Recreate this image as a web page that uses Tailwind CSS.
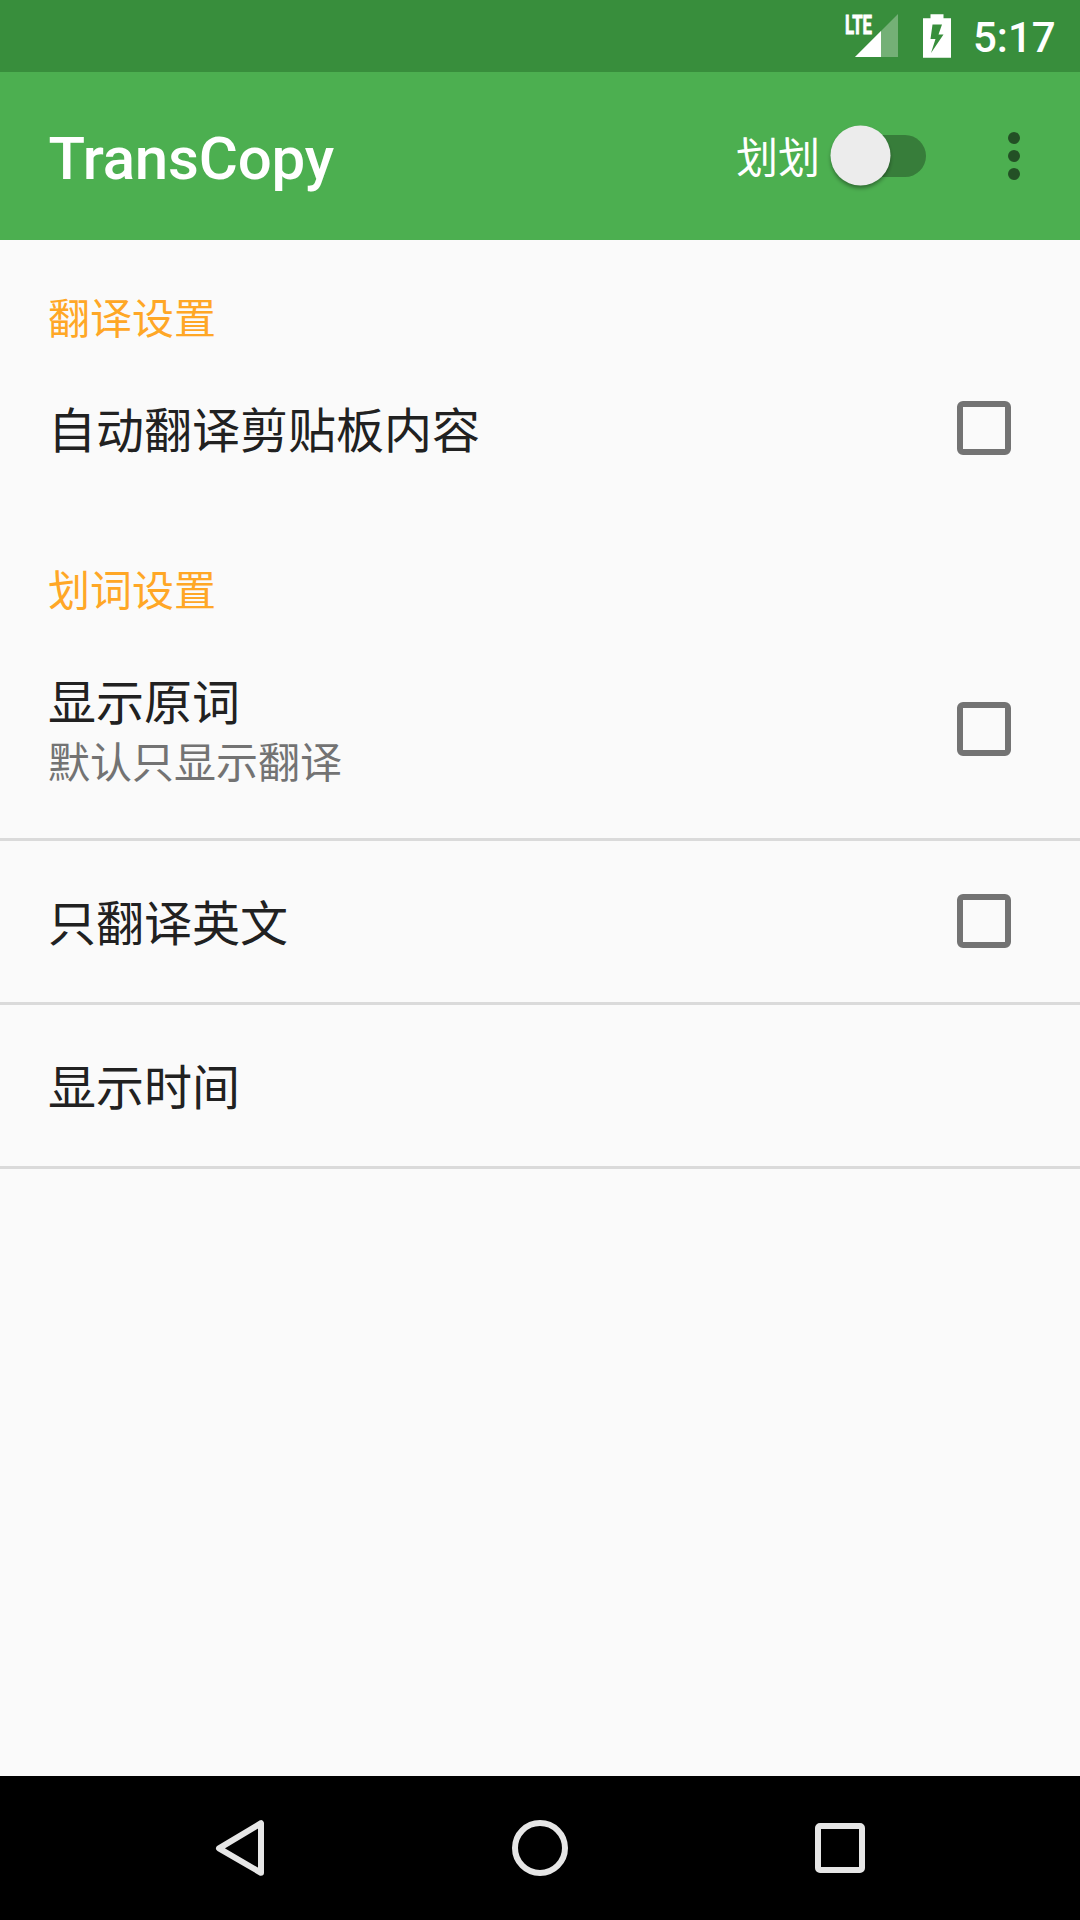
<!DOCTYPE html>
<html lang="zh-CN">
<head>
<meta charset="utf-8">
<title>TransCopy</title>
<script src="https://cdn.jsdelivr.net/npm/@tailwindcss/browser@4"></script>
</head>
<body class="w-[1080px] h-[1920px] flex flex-col overflow-hidden bg-[#fafafa] text-[#212121] font-['Noto_Sans_CJK_SC',sans-serif]">
  <!-- Status bar -->
  <div class="h-[72px] shrink-0 bg-[#388e3c] flex items-center justify-end pr-[24px] text-white">
    <svg class="w-[54px] h-[72px]" viewBox="844 0 54 72" fill="#fff">
      <path d="M898 14V57H855Z" fill-opacity=".3"/>
      <path d="M881 31V57H855Z"/>
      <text x="845" y="33.5" font-family="Roboto" font-weight="700" font-size="26" stroke="#fff" stroke-width=".9" textLength="27" lengthAdjust="spacingAndGlyphs">LTE</text>
    </svg>
    <svg class="w-[28px] h-[72px] ml-[25px]" viewBox="923 0 28 72" fill="#fff">
      <path fill-rule="evenodd" d="M930.500 14.300H943.500V18.300H951V57.700H923V18.300H930.500ZM932.500 24.500L930.500 39H935.500L931 53L943.500 34.500H938.500L942 24.500Z"/>
    </svg>
    <span class="ml-[22px] w-[83px] text-[42px] leading-[72px] font-medium font-[Roboto,sans-serif] whitespace-nowrap pt-[4px]">5:17</span>
  </div>

  <!-- App bar -->
  <header class="h-[168px] shrink-0 bg-[#4caf50] flex items-center pl-[48px] pr-[60px] text-white">
    <h1 class="text-[60px] leading-[70px] font-medium font-[Roboto,sans-serif] tracking-[-0.2px] pt-[5px] pl-[0.5px]">TransCopy</h1>
    <span class="ml-auto text-[42px] leading-[60px] pb-[3px]">划划</span>
    <svg class="w-[110px] h-[100px] ml-[5px] mr-[73px]" viewBox="825 106 110 100">
      <defs><filter id="s" x="-30%" y="-30%" width="160%" height="160%"><feGaussianBlur stdDeviation="2.2"/></filter></defs>
      <rect x="842" y="135" width="84" height="42" rx="21" fill="#377d3a"/>
      <circle cx="860.500" cy="158.500" r="29.500" fill="#000" fill-opacity=".4" filter="url(#s)"/>
      <circle cx="860.500" cy="155.500" r="30" fill="#ececec"/>
    </svg>
    <svg class="w-[12px] h-[48px]" viewBox="0 0 12 48" fill="#235025"><circle cx="6" cy="6" r="6"/><circle cx="6" cy="24" r="6"/><circle cx="6" cy="42" r="6"/></svg>
  </header>

  <!-- Preferences -->
  <main class="grow">
    <h2 class="h-[108px] pt-[49px] pl-[48px] text-[42px] leading-[54px] text-[#ffa726]">翻译设置</h2>
    <div class="h-[161px] mb-[3px] pb-[1px] pl-[48px] pr-[69px] flex items-center justify-between text-[48px]">
      <span class="leading-[60px] pb-[3px]">自动翻译剪贴板内容</span>
      <i class="size-[54px] rounded-[6px] border-6 border-[#737373]"></i>
    </div>

    <h2 class="h-[108px] pt-[49px] pl-[48px] text-[42px] leading-[54px] text-[#ffa726]">划词设置</h2>
    <div class="h-[221px] border-b-3 border-[#dadada] pl-[48px] pr-[69px] flex items-center justify-between text-[48px]">
      <div class="pt-[2px]">
        <div class="leading-[60px]">显示原词</div>
        <div class="text-[42px] leading-[62px] text-[#737373]">默认只显示翻译</div>
      </div>
      <i class="size-[54px] rounded-[6px] border-6 border-[#737373]"></i>
    </div>
    <div class="h-[164px] border-b-3 border-[#dadada] pb-[1px] pl-[48px] pr-[69px] flex items-center justify-between text-[48px]">
      <span class="leading-[60px] pb-[3px]">只翻译英文</span>
      <i class="size-[54px] rounded-[6px] border-6 border-[#737373]"></i>
    </div>
    <div class="h-[164px] border-b-3 border-[#dadada] pb-[1px] pl-[48px] flex items-center text-[48px]">
      <span class="leading-[60px] pb-[3px]">显示时间</span>
    </div>
  </main>

  <!-- Navigation bar -->
  <nav class="h-[144px] shrink-0 bg-black flex items-center justify-center gap-[240px] text-[#e6e6e6]">
    <svg class="w-[60px] h-[60px]" viewBox="210 1818 60 60" fill="none" stroke="currentColor" stroke-width="6" stroke-linejoin="round"><path d="M261 1823.200V1872.800L219 1848.300Z"/></svg>
    <svg class="w-[60px] h-[60px]" viewBox="510 1818 60 60" fill="none" stroke="currentColor" stroke-width="6"><circle cx="540" cy="1848" r="25"/></svg>
    <svg class="w-[60px] h-[60px]" viewBox="810 1818 60 60" fill="none" stroke="currentColor" stroke-width="6"><rect x="818" y="1826" width="44" height="44" rx="2"/></svg>
  </nav>
</body>
</html>
